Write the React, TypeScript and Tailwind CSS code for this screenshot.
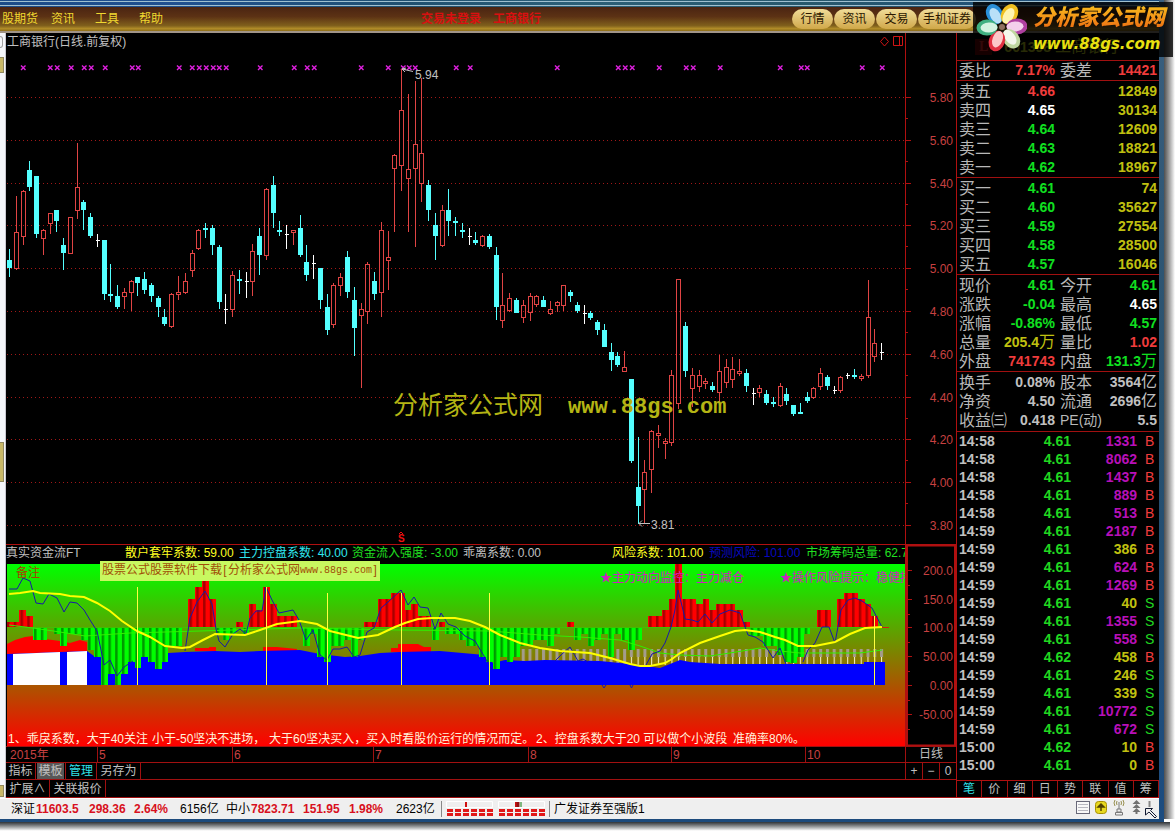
/**
 * App - Stock terminal: daily K-line, fund flow indicator and quote panel
 */

import type { ReactNode } from 'react';

type Kind = 'r' | 'c' | 'w';
type Candle = [high: number, top: number, bottom: number, low: number, kind: Kind];

const STEP = 6.76;
const candleX = (i: number) => Math.round(9 + i * STEP);

const CANDLES: Candle[] = [
  [249, 260, 268, 277, 'c'], [196, 232, 269, 270, 'r'], [190, 191, 237, 245, 'r'], [161, 170, 187, 191, 'c'],
  [176, 176, 234, 238, 'c'], [229, 230, 239, 255, 'r'], [213, 213, 224, 234, 'r'], [210, 210, 221, 232, 'c'],
  [238, 245, 253, 270, 'c'], [217, 217, 254, 254, 'r'], [143, 187, 211, 219, 'r'], [200, 202, 210, 230, 'c'],
  [213, 217, 236, 238, 'c'], [234, 240, 240, 247, 'w'], [240, 240, 294, 300, 'c'], [264, 294, 296, 302, 'c'],
  [285, 296, 307, 309, 'c'], [288, 292, 297, 309, 'r'], [280, 281, 293, 311, 'r'], [277, 277, 283, 296, 'c'],
  [272, 279, 290, 294, 'c'], [283, 285, 296, 302, 'c'], [296, 298, 307, 317, 'c'], [309, 317, 324, 326, 'c'],
  [293, 294, 327, 328, 'r'], [276, 292, 294, 300, 'r'], [273, 281, 293, 294, 'r'], [250, 253, 271, 277, 'r'],
  [229, 230, 249, 250, 'r'], [223, 228, 230, 238, 'c'], [225, 228, 245, 255, 'c'], [245, 247, 302, 309, 'c'],
  [294, 309, 309, 324, 'w'], [271, 275, 310, 317, 'r'], [270, 279, 281, 294, 'c'], [272, 281, 281, 298, 'w'],
  [244, 251, 282, 296, 'r'], [228, 236, 255, 275, 'c'], [188, 189, 256, 260, 'r'], [176, 185, 213, 228, 'c'],
  [221, 230, 232, 236, 'c'], [225, 234, 234, 249, 'w'], [230, 230, 232, 245, 'r'], [215, 228, 255, 257, 'c'],
  [245, 262, 275, 281, 'c'], [255, 263, 263, 279, 'w'], [268, 268, 300, 309, 'c'], [294, 307, 330, 335, 'c'],
  [283, 285, 325, 328, 'r'], [273, 277, 286, 296, 'r'], [251, 257, 292, 298, 'c'], [287, 300, 328, 356, 'c'],
  [303, 309, 316, 388, 'r'], [262, 264, 312, 324, 'r'], [272, 281, 294, 300, 'c'], [222, 230, 293, 317, 'r'],
  [231, 257, 261, 290, 'r'], [154, 155, 169, 232, 'r'], [69, 110, 166, 191, 'r'], [94, 169, 179, 232, 'r'],
  [81, 144, 169, 247, 'r'], [78, 153, 184, 202, 'r'], [180, 185, 210, 221, 'c'], [213, 225, 236, 260, 'c'],
  [205, 210, 246, 247, 'r'], [189, 210, 221, 236, 'c'], [217, 221, 223, 236, 'c'], [223, 230, 232, 238, 'c'],
  [228, 236, 236, 245, 'w'], [232, 240, 243, 245, 'c'], [235, 236, 246, 247, 'r'], [234, 236, 247, 249, 'c'],
  [247, 255, 307, 320, 'c'], [273, 305, 321, 328, 'r'], [293, 298, 311, 312, 'r'], [298, 300, 313, 313, 'c'],
  [300, 305, 318, 323, 'r'], [293, 296, 313, 321, 'r'], [295, 296, 305, 307, 'r'], [296, 300, 307, 307, 'c'],
  [301, 309, 314, 315, 'r'], [301, 302, 306, 312, 'r'], [285, 285, 306, 311, 'r'], [290, 292, 296, 302, 'c'],
  [302, 305, 311, 313, 'c'], [305, 313, 313, 324, 'w'], [311, 313, 318, 320, 'c'], [320, 322, 330, 335, 'c'],
  [324, 330, 347, 347, 'c'], [343, 352, 360, 371, 'c'], [352, 356, 365, 367, 'c'], [351, 367, 372, 372, 'r'],
  [379, 379, 461, 463, 'c'], [437, 487, 506, 524, 'c'], [460, 472, 490, 523, 'r'], [430, 431, 470, 493, 'r'],
  [425, 433, 436, 448, 'r'], [438, 441, 444, 459, 'r'], [370, 375, 443, 446, 'r'], [279, 279, 404, 409, 'r'],
  [322, 326, 371, 377, 'c'], [368, 375, 389, 407, 'r'], [370, 375, 387, 392, 'r'], [378, 381, 384, 389, 'r'],
  [382, 386, 390, 392, 'c'], [355, 371, 393, 403, 'r'], [359, 367, 383, 388, 'r'], [357, 369, 380, 388, 'r'],
  [359, 371, 374, 376, 'r'], [369, 373, 386, 392, 'c'], [388, 393, 393, 405, 'w'], [385, 388, 393, 397, 'r'],
  [390, 394, 403, 405, 'c'], [397, 402, 403, 407, 'c'], [383, 386, 406, 407, 'r'], [388, 394, 401, 405, 'c'],
  [405, 405, 414, 416, 'c'], [403, 412, 414, 414, 'c'], [392, 397, 401, 403, 'c'], [387, 388, 398, 399, 'r'],
  [368, 373, 387, 390, 'r'], [375, 377, 386, 390, 'c'], [386, 390, 390, 394, 'w'], [376, 377, 391, 393, 'r'],
  [373, 375, 375, 379, 'w'], [369, 375, 377, 379, 'c'], [374, 376, 379, 381, 'r'], [280, 317, 376, 378, 'r'],
  [329, 343, 357, 362, 'r'], [343, 352, 352, 360, 'w'],
];

const SIGNALS = [
  23, 50, 57, 71, 84, 91, 105, 132, 138, 179, 192, 199, 206, 213, 219, 226, 260, 294, 307, 314, 361, 388,
  403, 409, 415, 456, 470, 557, 618, 625, 632, 659, 686, 693, 720, 780, 801, 807, 862, 882,
];

const PRICE_AXIS: [string, number][] = [
  ['5.80', 97], ['5.60', 140], ['5.40', 183], ['5.20', 225], ['5.00', 268], ['4.80', 311],
  ['4.60', 354], ['4.40', 397], ['4.20', 439], ['4.00', 482], ['3.80', 525],
];

// fund flow bars: [x from, x to, y end], measured from the 100 line
const BASE = 627;
const FLOW_BARS: [number, number, number][] = [
  [7, 19, 622], [19, 26, 610], [26, 33, 616], [33, 47, 640], [54, 60, 634], [60, 67, 646], [67, 81, 634],
  [81, 88, 640], [88, 94, 650], [94, 101, 657], [101, 108, 685], [108, 115, 674], [115, 121, 685],
  [121, 128, 674], [128, 135, 662], [135, 141, 668], [141, 148, 657], [148, 155, 662], [155, 162, 669],
  [162, 168, 662], [168, 182, 646], [188, 195, 599], [195, 202, 587], [202, 209, 570], [209, 216, 599],
  [216, 223, 634], [223, 229, 640], [229, 236, 634], [236, 243, 622], [243, 249, 634], [249, 256, 604],
  [256, 263, 610], [263, 270, 587], [270, 277, 604], [277, 297, 616], [303, 310, 646], [310, 317, 634],
  [317, 324, 657], [324, 331, 662], [331, 344, 646], [344, 351, 640], [351, 358, 657], [358, 364, 640],
  [364, 378, 622], [378, 391, 599], [391, 405, 593], [405, 411, 610], [411, 418, 604], [418, 431, 616],
  [432, 439, 640], [439, 445, 622], [445, 459, 634], [459, 466, 640], [466, 479, 646], [479, 486, 657],
  [486, 493, 662], [493, 500, 669], [500, 507, 657], [507, 513, 662], [513, 520, 657], [520, 533, 646],
  [533, 547, 640], [547, 554, 646], [554, 560, 634], [567, 574, 622], [574, 581, 640], [581, 588, 634],
  [588, 594, 646], [594, 601, 640], [601, 608, 634], [608, 614, 657], [614, 621, 634], [621, 628, 640],
  [628, 635, 650], [635, 642, 640], [648, 662, 616], [662, 669, 610], [669, 675, 599], [675, 682, 564],
  [682, 696, 599], [696, 703, 604], [703, 709, 599], [709, 716, 610], [716, 735, 604], [735, 743, 610],
  [743, 750, 622], [750, 763, 636], [763, 777, 646], [777, 784, 655], [784, 790, 662], [790, 797, 663],
  [797, 804, 657], [804, 810, 634], [817, 831, 610], [837, 844, 599], [844, 858, 593], [858, 865, 599],
  [865, 871, 604], [871, 878, 616],
];

const MARK_LINES: [number, number][] = [[137, 587], [266, 587], [327, 593], [401, 593], [489, 593], [874, 616]];

const FLOW_AXIS: [string, number][] = [
  ['200.0', 571], ['150.0', 600], ['100.0', 628], ['50.00', 657], ['0.00', 686], ['-50.00', 715],
];

const MONTHS: [string, number][] = [['5', 97], ['6', 232], ['7', 373], ['8', 528], ['9', 671], ['10', 805]];

const TEXT = {
  red: 'text-[#f03c3c]',
  green: 'text-[#10e020]',
  yellow: 'text-[#c0c010]',
  white: 'text-white',
  gray: 'text-[#c0c0c0]',
  purple: 'text-[#b810b8]',
};
type Tone = keyof typeof TEXT;

const SELLS: [string, string, Tone, string][] = [
  ['卖五', '4.66', 'red', '12849'],
  ['卖四', '4.65', 'white', '30134'],
  ['卖三', '4.64', 'green', '12609'],
  ['卖二', '4.63', 'green', '18821'],
  ['卖一', '4.62', 'green', '18967'],
];
const BUYS: [string, string, Tone, string][] = [
  ['买一', '4.61', 'green', '74'],
  ['买二', '4.60', 'green', '35627'],
  ['买三', '4.59', 'green', '27554'],
  ['买四', '4.58', 'green', '28500'],
  ['买五', '4.57', 'green', '16046'],
];

type QuoteRow = [string, string, Tone, string, string, Tone];
const PRICE_ROWS: QuoteRow[] = [
  ['现价', '4.61', 'green', '今开', '4.61', 'green'],
  ['涨跌', '-0.04', 'green', '最高', '4.65', 'white'],
  ['涨幅', '-0.86%', 'green', '最低', '4.57', 'green'],
  ['总量', '205.4万', 'yellow', '量比', '1.02', 'red'],
  ['外盘', '741743', 'red', '内盘', '131.3万', 'green'],
];
const CAPITAL_ROWS: QuoteRow[] = [
  ['换手', '0.08%', 'gray', '股本', '3564亿', 'gray'],
  ['净资', '4.50', 'gray', '流通', '2696亿', 'gray'],
  ['收益㈢', '0.418', 'gray', 'PE(动)', '5.5', 'gray'],
];

const TICKS: [string, string, string, Tone, 'B' | 'S'][] = [
  ['14:58', '4.61', '1331', 'purple', 'B'],
  ['14:58', '4.61', '8062', 'purple', 'B'],
  ['14:58', '4.61', '1437', 'purple', 'B'],
  ['14:58', '4.61', '889', 'purple', 'B'],
  ['14:58', '4.61', '513', 'purple', 'B'],
  ['14:59', '4.61', '2187', 'purple', 'B'],
  ['14:59', '4.61', '386', 'yellow', 'B'],
  ['14:59', '4.61', '624', 'purple', 'B'],
  ['14:59', '4.61', '1269', 'purple', 'B'],
  ['14:59', '4.61', '40', 'yellow', 'S'],
  ['14:59', '4.61', '1355', 'purple', 'S'],
  ['14:59', '4.61', '558', 'purple', 'S'],
  ['14:59', '4.62', '458', 'yellow', 'B'],
  ['14:59', '4.61', '246', 'yellow', 'S'],
  ['14:59', '4.61', '339', 'yellow', 'S'],
  ['14:59', '4.61', '10772', 'purple', 'S'],
  ['14:59', '4.61', '672', 'purple', 'S'],
  ['15:00', '4.62', '10', 'yellow', 'B'],
  ['15:00', '4.61', '0', 'yellow', 'B'],
];

const CandleShape = ({ x, candle }: { x: number; candle: Candle }) => {
  const [high, top, bottom, low, kind] = candle;
  if (kind === 'w') {
    return <path d={`M${x + 0.5} ${high}V${low}M${x - 1} ${top + 0.5}h4`} stroke="#fff" />;
  }
  if (kind === 'c') {
    return (
      <g fill="#54ffff">
        <rect x={x} y={high} width="1" height={low - high} />
        <rect x={x - 2} y={top} width="5" height={Math.max(2, bottom - top)} />
      </g>
    );
  }
  return (
    <g stroke="#e04444" fill="none">
      <path d={`M${x + 0.5} ${high}V${top}M${x + 0.5} ${bottom}V${low}`} />
      <rect x={x - 1.5} y={top + 0.5} width="4" height={Math.max(2, bottom - top - 1)} />
    </g>
  );
};

const PriceChart = () => (
  <svg viewBox="6 33 950 511" className="block w-full" role="img" aria-label="工商银行日线">
    {PRICE_AXIS.map(([label, y]) => (
      <g key={label}>
        <path d={`M7 ${y + 0.5}H905`} stroke="#a01818" strokeDasharray="1 3" />
        <path d={`M905 ${y + 0.5}h6M905 ${y + 21.5}h3`} stroke="#b01010" />
        <text x="953" y={y + 5} textAnchor="end" fontSize="12" fill="#c84040">{label}</text>
      </g>
    ))}
    <path d="M905.5 33V544" stroke="#b01010" />
    <text x="7" y="46" fontSize="12" fill="#c0c0c0">工商银行(日线.前复权)</text>
    <g fill="none" stroke="#d01414">
      <path d="M884.5 37l4 4.500-4 4.500-4-4.500z" />
      <path d="M893.500 36.500h9v9h-9zM899.500 36.500v9" />
    </g>
    {SIGNALS.map((x) => (
      <path key={x} d={`M${x - 2} 65.500l4.500 4.500M${x + 2.5} 65.500l-4.500 4.500`} stroke="#e020e0" strokeWidth="1.400" />
    ))}
    <g shapeRendering="crispEdges">
      {CANDLES.map((candle, i) => (
        <CandleShape key={i} x={candleX(i)} candle={candle} />
      ))}
    </g>
    <path d="M402 69l11 2.500M402 69l3 3M402 69l4-1" stroke="#c0c0c0" fill="none" />
    <text x="415" y="79" fontSize="12" fill="#c0c0c0">5.94</text>
    <path d="M639 523.500h11M639 523.500l3-3M639 523.500l3 3" stroke="#c0c0c0" fill="none" />
    <text x="651" y="529" fontSize="12" fill="#c0c0c0">3.81</text>
    <path d="M399 534l2-2 2 2" stroke="#f01010" fill="none" />
    <text x="398" y="542" fontSize="10" fontWeight="700" fill="#f01010">S</text>
    <text x="393" y="414" fontSize="25" fill="#b4b414">分析家公式网</text>
    <text x="568" y="413" className="font-['Liberation_Mono',monospace]" fontSize="22" fontWeight="700" fill="#b4b414">
      www.88gs.com
    </text>
  </svg>
);

const FlowChart = () => (
  <svg viewBox="6 564 899 182" className="block w-full" role="img" aria-label="真实资金流">
    <defs>
      <linearGradient id="sky" x1="0" y1="0" x2="0" y2="1">
        <stop offset="0" stopColor="#00ff00" />
        <stop offset="0.500" stopColor="#808000" />
        <stop offset="1" stopColor="#ff0000" />
      </linearGradient>
      <pattern id="up" x="7" y="0" width="6.760" height="10" patternUnits="userSpaceOnUse">
        <rect width="7" height="10" fill="#ff0000" />
        <rect width="2.500" height="10" fill="#a80000" />
      </pattern>
      <pattern id="down" x="7" y="0" width="6.760" height="10" patternUnits="userSpaceOnUse">
        <rect width="7" height="10" fill="#00ff00" />
        <rect width="2.500" height="10" fill="#009800" />
      </pattern>
      <pattern id="chips" x="7" y="0" width="6.760" height="10" patternUnits="userSpaceOnUse">
        <rect x="1" width="3" height="10" fill="#a49c8c" />
      </pattern>
      <pattern id="stems" x="7" y="0" width="6.760" height="10" patternUnits="userSpaceOnUse">
        <rect x="2" width="1" height="10" fill="#fff8d0" />
      </pattern>
    </defs>
    <rect x="7" y="564" width="898" height="182" fill="url(#sky)" />
    <path
      d="M7 644l8-4 10-3 8-1 12 3 15 2 10 2 10-3 7 2v12H7zM195 651v-3h14v-1h7v4zM263 651v-4h14l20 2v3zM391 652v-4h7v-4h20l6 3h7v5z"
      fill="#ff0000"
    />
    <rect x="520" y="649" width="364" height="8" fill="url(#chips)" />
    <rect x="520" y="657" width="108" height="8" fill="url(#chips)" />
    <rect x="628" y="657" width="256" height="8" fill="url(#stems)" />
    <path
      d="M7 654L87 651 94 656 101 657 168 653 185 652 215 651 240 652 260 651 300 650 320 654 345 657 360 656 380 653 400 652 440 651 485 655 493 663 505 660 525 661 545 660 600 661 640 665 660 668 680 660 690 662 720 664 864 664 864 662 885 662 885 685 7 685z"
      fill="#0000ff"
    />
    <path d="M13 654l47-2v33H13zM67 652l20-1v34H67z" fill="#fff" />
    {FLOW_BARS.map(([from, to, y]) => (
      <rect
        key={from}
        x={from}
        y={Math.min(y, BASE)}
        width={to - from}
        height={Math.abs(BASE - y)}
        fill={y < BASE ? 'url(#up)' : 'url(#down)'}
      />
    ))}
    <path d="M33 627.500H885" stroke="#40c000" />
    <path d="M878 627.500h11" stroke="#d02010" />
    <polyline
      points="9,625 33,628 60,632 85,636 130,633 200,631 300,628 400,630 490,631 540,635 580,637 620,640 640,646 660,653 680,655 710,656 730,653 760,648 780,651 800,653 830,653 860,653 882,650"
      fill="none"
      stroke="#30f000"
    />
    <g fill="none" stroke="#1818a8">
      <polyline points="9,589 17,589 23,578 30,581 36,603 43,604 49,594 57,598 64,612 70,602 77,603 84,610 90,620 97,631 101,650 104,665 110,660 117,676 124,667 133,661" />
      <polyline points="185,651 190,618 197,602 205,591 212,604 216,629 219,641 225,647 233,634 240,629 246,634 250,618 256,611 262,611 266,587 272,600 279,613 293,610 299,620 306,640 313,630 320,655 327,660 333,649 340,649 347,647 354,657 360,655 367,632 374,628 381,608 387,603 401,590 408,605 414,597 420,607 428,608 435,629 441,613 448,624 456,627 465,636 475,641 484,656 492,670" />
      <polyline points="555,661 562,654 570,647 578,661 583,659 588,662" />
      <polyline points="646,665 652,654 660,651 665,643 671,627 675,610 678,590 683,610 685,619 692,620 698,622 705,614 712,623 720,614 730,610 740,613 748,635 755,637 763,642 773,658 780,648 786,664" />
      <polyline points="803,662 808,650 815,643 822,627 829,627 835,643 841,610 848,600 855,598 862,601 872,608 882,627" />
      <path d="M602 685l2 3 2-3M630 685l1.500 3 1.500-3" />
    </g>
    <polyline
      points="9,594 20,593 33,591 40,593 60,594 70,596 84,597 97,603 110,611 122,621 137,631 150,637 165,646 182,648 190,647 203,640 215,634 245,635 260,630 277,624 300,621 317,624 330,631 358,638 378,635 395,627 405,623 418,619 432,618 455,618 470,621 485,627 500,635 520,643 540,648 560,651 590,653 610,658 630,664 640,666 650,666 665,663 672,659 680,653 700,643 720,636 735,631 745,630 760,632 775,637 785,640 798,646 815,646 835,642 850,634 865,628 882,627"
      fill="none"
      stroke="#ffff00"
      strokeWidth="2"
    />
    {MARK_LINES.map(([x, y]) => (
      <path key={x} d={`M${x + 0.5} ${y}V685`} stroke="#ffff40" />
    ))}
    <g fontSize="12">
      <text x="16" y="577" fill="#a84000">备注</text>
      <g fill="#d020c0">
        <text x="600" y="582">★主力动向监控：主力减仓</text>
        <text x="780" y="582">★操作风险提示：稳健持股</text>
      </g>
      <g fill="#fff4dc">
        <text x="8" y="743">1、乖戾系数，大于40关注</text>
        <text x="152" y="743">小于-50坚决不进场，</text>
        <text x="269" y="743">大于60坚决买入，买入时看股价运行的情况而定。</text>
        <text x="536" y="743">2、控盘系数大于20 可以做个小波段</text>
        <text x="733" y="743">准确率80%。</text>
      </g>
    </g>
  </svg>
);

const FlowAxis = () => (
  <svg viewBox="905 545 51 201" className="block w-[51px] shrink-0" aria-hidden="true">
    <path d="M905.500 545v201" stroke="#b01010" />
    <path d="M907 545.500h48v200h-48z" fill="none" stroke="#b01010" strokeWidth="2" />
    {FLOW_AXIS.map(([label, y]) => (
      <g key={label}>
        <path d={`M907 ${y - 0.5}h5M907 ${y + 14.5}h3`} stroke="#b01010" />
        <text x="953" y={y + 4} textAnchor="end" fontSize="12" fill="#c84040">{label}</text>
      </g>
    ))}
  </svg>
);

const IndicatorHeader = () => (
  <div className="grid h-[19px] grid-cols-[119px_114px_113px_111px_149px_97px_97px_1fr] overflow-hidden whitespace-nowrap text-xs leading-[17px]">
    <span className="text-[#c0c0c0]">真实资金流FT</span>
    <span className="text-[#ffff20]">散户套牢系数: 59.00</span>
    <span className="text-[#30e8f0]">主力控盘系数: 40.00</span>
    <span className="text-[#20e020]">资金流入强度: -3.00</span>
    <span className="text-[#c0c0c0]">乖离系数: 0.00</span>
    <span className="text-[#ffff20]">风险系数: 101.00</span>
    <span className="text-[#0808c0]">预测风险: 101.00</span>
    <span className="overflow-hidden text-[#20e020]">市场筹码总量: 62.7</span>
  </div>
);

const DateAxis = () => (
  <div className="flex h-[17px] border-y border-[#a01010]">
    <svg viewBox="6 747 899 15" className="block min-w-0 flex-1" aria-hidden="true">
      <text x="10" y="759" fontSize="12" fill="#c84040">2015年</text>
      {MONTHS.map(([label, x]) => (
        <g key={label}>
          <path d={`M${x + 0.5} 747v15`} stroke="#a01010" />
          <text x={x + 2} y="759" fontSize="12" fill="#c84040">{label}</text>
        </g>
      ))}
    </svg>
    <span className="w-[51px] shrink-0 border-l border-[#a01010] text-center text-xs leading-[15px] text-[#c0c0c0]">日线</span>
  </div>
);

const TabRow = ({ children }: { children: ReactNode }) => (
  <div className="flex border-b border-[#a01010] text-xs leading-4 text-[#c0c0c0]">{children}</div>
);

const ChartTabs = () => (
  <>
    <TabRow>
      <button className="h-4 w-[30px] border-r border-[#a01010]">指标</button>
      <button className="h-4 w-[30px] border-r border-[#a01010] px-px">
        <span className="block bg-[#585858]">模板</span>
      </button>
      <button className="h-4 w-[31px] border-r border-[#a01010] text-[#30e0e8]">管理</button>
      <button className="h-4 w-11 border-r border-[#a01010]">另存为</button>
      <div className="ml-auto flex w-[51px] border-l border-[#a01010]">
        <button className="flex-1 border-r border-[#a01010]">+</button>
        <button className="flex-1 border-r border-[#a01010]">−</button>
        <button className="flex-1">0</button>
      </div>
    </TabRow>
    <TabRow>
      <button className="h-[17px] w-11 border-r border-[#a01010]">扩展∧</button>
      <button className="h-[17px] w-14 border-r border-[#a01010]">关联报价</button>
    </TabRow>
  </>
);

const Label = ({ children }: { children: ReactNode }) => (
  <th scope="row" className="p-0 text-left text-base leading-[19px] font-normal text-[#b8b8b8]">{children}</th>
);

const DepthTable = ({ rows }: { rows: [string, string, Tone, string][] }) => (
  <div className="border-b border-[#a01010] pt-px pr-0.5 pl-0.5">
    <table className="w-full table-fixed whitespace-nowrap">
      <tbody>
        {rows.map(([label, price, tone, volume]) => (
          <tr key={label} className="h-[19px] text-sm leading-[19px] font-bold">
            <Label>{label}</Label>
            <td className={`w-16 p-0 text-right ${TEXT[tone]}`}>{price}</td>
            <td className="w-[102px] p-0 text-right text-[#c0c010]">{volume}</td>
          </tr>
        ))}
      </tbody>
    </table>
  </div>
);

// keeps the CJK unit in the regular weight, next to a bold number
const Value = ({ text }: { text: string }) => {
  const unit = /[万亿]$/.exec(text)?.[0];
  if (!unit) return <>{text}</>;
  return (
    <>
      {text.slice(0, -1)}
      <span className="text-base leading-none font-normal">{unit}</span>
    </>
  );
};

const QuoteTable = ({ rows }: { rows: QuoteRow[] }) => (
  <table className="w-full table-fixed whitespace-nowrap">
    <tbody>
      {rows.map(([l1, v1, t1, l2, v2, t2]) => (
        <tr key={l1} className="h-[19px] text-sm leading-[19px] font-bold">
          <Label>{l1}</Label>
          <td className={`w-16 p-0 text-right ${TEXT[t1]}`}>
            <Value text={v1} />
          </td>
          <th scope="row" className={`w-[45px] p-0 pl-[5px] text-left leading-[19px] font-normal text-[#b8b8b8] ${l2.startsWith('PE') ? 'text-[14px]' : 'text-[16px]'}`}>
            {l2}
          </th>
          <td className={`w-[57px] p-0 text-right ${TEXT[t2]}`}>
            <Value text={v2} />
          </td>
        </tr>
      ))}
    </tbody>
  </table>
);

const QuotePanel = () => (
  <aside className="flex w-[203px] shrink-0 flex-col border-l border-[#b01010]">
    <h1 className="flex h-7 items-center border-b border-[#a01010] pl-[18px] text-base font-normal whitespace-nowrap text-[#c8d820]">
      <span className="mr-3 bg-[#700000] px-1 font-['Liberation_Serif',serif] text-sm leading-4 font-bold text-[#ff3030]">L</span>
      <span className="mr-1 text-sm font-bold">601398</span>
      <span>工商银行</span>
    </h1>
    <div className="h-5 border-b border-[#a01010] px-0.5">
      <QuoteTable rows={[['委比', '7.17%', 'red', '委差', '14421', 'red']]} />
    </div>
    <DepthTable rows={SELLS} />
    <DepthTable rows={BUYS} />
    <div className="border-b border-[#a01010] px-0.5 pt-px">
      <QuoteTable rows={PRICE_ROWS} />
    </div>
    <div className="border-b border-[#a01010] px-0.5 py-px">
      <QuoteTable rows={CAPITAL_ROWS} />
    </div>
    <table className="w-full table-fixed text-sm leading-[18px] font-bold">
      <tbody>
        {TICKS.map(([time, price, volume, tone, side], i) => (
          <tr key={i} className="h-[18px]">
            <td className="p-0 pl-0.5 text-[#c0c0c0]">{time}</td>
            <td className="w-14 p-0 text-right text-[#20d820]">{price}</td>
            <td className={`w-[66px] p-0 text-right ${TEXT[tone]}`}>{volume}</td>
            <td className={`w-[22px] p-0 pl-2 font-normal ${side === 'B' ? 'text-[#f03c3c]' : 'text-[#20d820]'}`}>{side}</td>
          </tr>
        ))}
      </tbody>
    </table>
    <div className="mt-auto flex h-[18px] border-y border-[#b01010] text-xs leading-4 text-[#c0c0c0]">
      {['笔', '价', '细', '日', '势', '联', '值', '筹'].map((name, i) => (
        <button key={name} className={`flex-1 border-r border-[#a01010] ${i === 0 ? 'text-[#30e0e8]' : ''}`}>
          {name}
        </button>
      ))}
    </div>
  </aside>
);

const MenuBar = () => (
  <header className="flex h-[26px] items-center border-b-2 border-[#a09488] bg-[linear-gradient(#4a2412,#5c3214_40%,#80601c_78%,#b08c28_90%,#8c6c18)] text-xs whitespace-nowrap text-[#f0d830]">
    <nav className="flex w-[421px] shrink-0 gap-5">
      <button className="-mr-[7px] ml-0.5">股期货</button>
      <button>资讯</button>
      <button>工具</button>
      <button>帮助</button>
    </nav>
    <div className="flex flex-1 gap-3 font-bold text-[#d81010]">
      <span>交易未登录</span>
      <span>工商银行</span>
    </div>
    <div className="flex w-[367px] shrink-0 gap-px text-[#2c1800]">
      {['行情', '资讯', '交易'].map((name) => (
        <button key={name} className="h-5 w-[41px] rounded-full bg-linear-to-b from-[#f0dc98] to-[#d0a848]">
          {name}
        </button>
      ))}
      <button className="h-5 w-[58px] rounded-full bg-linear-to-b from-[#f0dc98] to-[#d0a848]">手机证券</button>
    </div>
  </header>
);

const PETALS: [number, string, string][] = [
  [-30, '#2a90d8', '#b8e0f8'],
  [30, '#f0c020', '#fff4b0'],
  [88, '#b040a0', '#f4d0ec'],
  [142, '#c0d8a0', '#f4f8ec'],
  [200, '#e03040', '#fcc8c8'],
  [268, '#40b080', '#d4f4e0'],
];

const SiteLogo = () => (
  <div className="absolute top-0.5 right-0.5 flex h-[55px] w-[200px] bg-black/80">
    <svg viewBox="0 0 54 54" className="h-[54px] w-[54px] shrink-0" aria-hidden="true">
      <g transform="translate(29 25)">
        {PETALS.map(([angle, edge, inner]) => (
          <g key={angle} transform={`rotate(${angle})`}>
            <ellipse cx="0" cy="-15" rx="8" ry="10.500" fill={edge} />
            <ellipse cx="0" cy="-13" rx="5" ry="8.500" fill={inner} />
          </g>
        ))}
        <circle r="3" fill="#907060" />
      </g>
    </svg>
    <div className="flex flex-1 flex-col pl-1.5 whitespace-nowrap italic">
      <span className="bg-linear-to-b from-[#f8c820] to-[#e85810] bg-clip-text text-[22px] leading-[32px] font-black text-transparent">
        分析家公式网
      </span>
      <span className="font-['DejaVu_Sans',sans-serif] text-[15px] leading-5 font-bold text-[#e8e010]">www.88gs.com</span>
    </div>
  </div>
);

const MiniBars = () => (
  <svg viewBox="0 0 99 16" className="h-4 w-[99px]" aria-hidden="true">
    <g fill="none" stroke="#fff">
      <path d="M.500 .500h46v6H.500zM52.500 .500h46v6h-46z" />
    </g>
    <path d="M1 9.500h46M53 9.500h46M1 13.500h46M53 13.500h46" stroke="#e01818" strokeWidth="3" strokeDasharray="6 2" />
    <path d="M20 1v5M70 1v5" stroke="#d01010" strokeWidth="2" />
    <path d="M72 1v5" stroke="#901010" strokeWidth="3" />
    <path d="M75 1v5" stroke="#108010" />
  </svg>
);

const TrayIcons = () => (
  <svg viewBox="0 0 84 24" className="h-6 w-[84px]" aria-hidden="true">
    <rect x="1.500" y="4.500" width="13" height="12" fill="#f8f8f8" stroke="#686878" />
    <path d="M3 7.500h10M3 10.500h10M3 13.500h10" stroke="#b8b8c0" />
    <rect x="20.500" y="4.500" width="11" height="12" rx="3" fill="#e8d820" stroke="#a89000" />
    <path d="M26 14V8M23 10l3-3 3 3z" stroke="#504000" strokeWidth="1.500" fill="#504000" />
    <g fill="none" stroke="#989050">
      <path d="M40 3q-2 3 0 6M48 3q2 3 0 6M42 4q-1 2 0 4M46 4q1 2 0 4" />
      <path d="M44 5v7M42 12h4v3h-4zM40.500 15.500h7v2.500h-7z" stroke="#787878" />
    </g>
    <path d="M61.500 3l4 4h-8zM61.500 7l4 4h-8zM61.500 11l4 4h-8zM60.500 14h2v3h-2z" fill="#707070" />
    <path d="M74.500 4v6" stroke="#888" strokeWidth="2" />
    <path d="M70.500 11.500h7l-2 2 6 6-1.500 1.500-6-6-3.500 3z" fill="#f0f0f0" stroke="#101830" />
  </svg>
);

const StatusBar = () => (
  <footer className="flex h-[21px] items-center border-t border-white bg-[#efefef] text-xs whitespace-nowrap text-black">
    <div className="flex pl-[11px]">
      <span className="w-[25px]">深证</span>
      <b className="w-[53px] text-[#d81020]">11603.5</b>
      <b className="w-[45px] text-[#d81020]">298.36</b>
      <b className="w-[46px] text-[#d81020]">2.64%</b>
      <span className="w-[46px]">6156亿</span>
      <span className="w-[25px]">中小</span>
      <b className="w-[52px] text-[#d81020]">7823.71</b>
      <b className="w-[46px] text-[#d81020]">151.95</b>
      <b className="w-[47px] text-[#d81020]">1.98%</b>
      <span className="w-[45px]">2623亿</span>
    </div>
    <div className="flex items-center border-x border-[#888] px-1">
      <MiniBars />
    </div>
    <span className="pl-1">广发证券至强版1</span>
    <div className="ml-auto">
      <TrayIcons />
    </div>
  </footer>
);

const SideStrip = () => (
  <div className="flex w-1.5 shrink-0 flex-col border-r border-[#c8c8d0] bg-[#f4f6fa]">
    <div className="mt-[3px] h-3 w-[3px] rounded-r-full border border-l-0 border-[#a0a0a0]" />
    <div className="mt-[9px] h-4 w-1 border border-l-0 border-[#908860] bg-[#c8b868]" />
    <div className="mt-[369px] h-10 w-1 border border-l-0 border-[#908860] bg-[#c8b868]" />
    <div className="mt-auto mb-px h-3 w-1 border border-l-0 border-[#908860] bg-[#c8b868]" />
  </div>
);

export default function App() {
  return (
    <div className="relative flex min-h-screen flex-col bg-white font-['Liberation_Sans','Noto_Sans_CJK_SC',sans-serif]">
      <div className="flex">
        <div className="min-w-0 flex-1">
          <div className="h-[7px] bg-[linear-gradient(90deg,#1c4c88,#205090_15%,#205070_35%,#2c6078_50%,#28586c_70%,#1c4c80)] py-px">
            <div className="h-[5px] border-y border-[#a0c0d0]" />
          </div>
          <MenuBar />
          <main className="flex bg-black">
            <SideStrip />
            <div className="min-w-0 flex-1">
              <PriceChart />
              <section className="relative flex border-t border-[#b01010]">
                <div className="min-w-0 flex-1">
                  <IndicatorHeader />
                  <FlowChart />
                </div>
                <FlowAxis />
                <p className="absolute top-4 left-[94px] flex h-5 w-[280px] bg-[#c8f860] pl-0.5 text-xs leading-[19px] whitespace-nowrap text-[#a05008]">
                  股票公式股票软件下载
                  <span className="w-1.5 text-center">[</span>
                  分析家公式网
                  <span className="font-['Liberation_Mono',monospace] text-[10px]">www.88gs.com</span>
                  <span className="w-1.5 text-center">]</span>
                </p>
              </section>
              <DateAxis />
              <ChartTabs />
            </div>
            <QuotePanel />
          </main>
          <StatusBar />
        </div>
        <div className="w-[5px] bg-linear-to-b from-[#3a6080] via-[#28506c] to-[#1c4c80]" />
        <div className="w-[11px] bg-linear-to-r from-[#505050] to-white" />
      </div>
      <div className="mr-[11px] h-[3px] bg-[#1c4a7c]" />
      <div className="mr-[5px] flex-1 bg-linear-to-b from-[#303438] to-white to-80%" />
      <SiteLogo />
    </div>
  );
}
